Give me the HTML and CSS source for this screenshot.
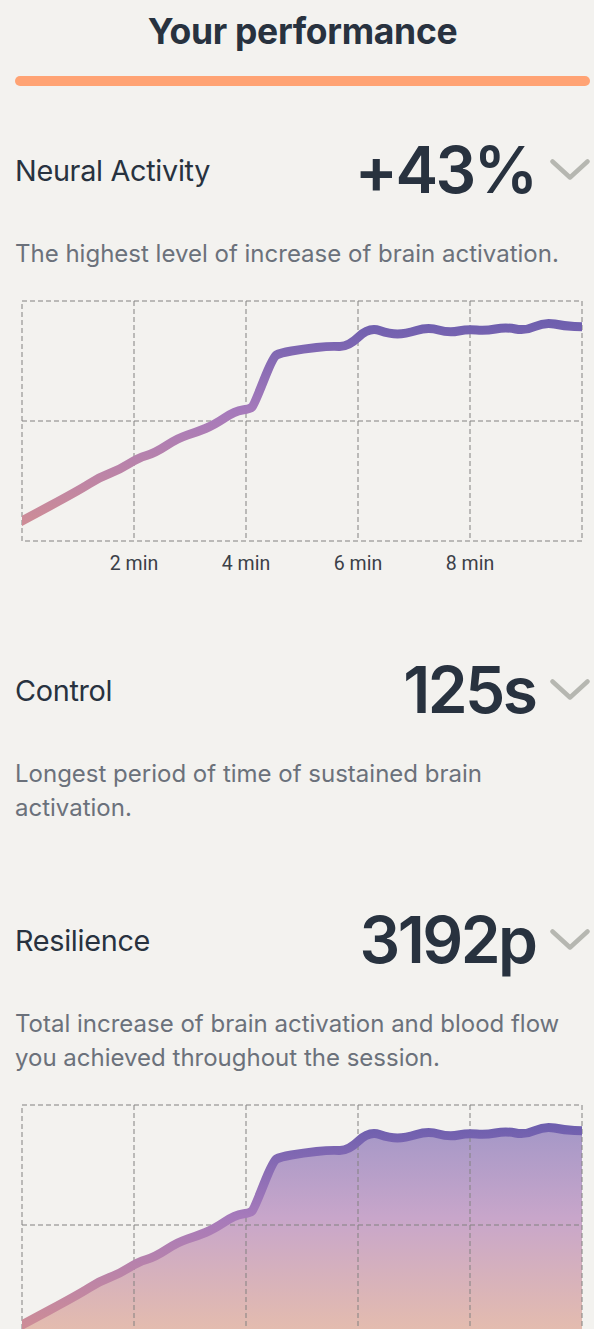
FILE: index.html
```html
<!DOCTYPE html>
<html lang="en">
<head>
  <meta charset="UTF-8" />
  <meta name="viewport" content="width=device-width, initial-scale=1.0"/>
  <title>Your performance</title>
  <link rel="stylesheet" href="styles.css">
</head>
<body>

  <div class="page">
    <h1>Your performance</h1>
    <div class="accent-bar"></div>

    <!-- Neural Activity -->
    <div class="metric metric-first">
      <span class="metric-label">Neural Activity</span>
      <div class="metric-right">
        <span class="metric-value">+43%</span>
        <svg class="chevron" width="40" height="22" viewBox="0 0 40 22">
          <path d="M2.5 2.5 L20 18.5 L37.5 2.5" />
        </svg>
      </div>
    </div>
    <p class="desc">The highest level of increase of brain activation.</p>

    <svg class="chart" width="575" height="285" viewBox="0 0 575 285">
      <defs>
        <linearGradient id="lineGrad" gradientUnits="userSpaceOnUse" x1="0" y1="25" x2="0" y2="225">
          <stop offset="0" stop-color="#6e5fae"/>
          <stop offset="0.45" stop-color="#a67abb"/>
          <stop offset="1" stop-color="#cd8c97"/>
        </linearGradient>
        <clipPath id="clip1"><rect x="7" y="0" width="560" height="285"/></clipPath>
      </defs>
      <g class="grid">
        <rect x="7" y="4" width="560" height="240"/>
        <line x1="7" y1="124" x2="567" y2="124"/>
        <line x1="119" y1="4" x2="119" y2="244"/>
        <line x1="231" y1="4" x2="231" y2="244"/>
        <line x1="343" y1="4" x2="343" y2="244"/>
        <line x1="455" y1="4" x2="455" y2="244"/>
      </g>
      <path class="curve" clip-path="url(#clip1)" stroke="url(#lineGrad)"
        d="M5 225 L34.75 209 Q64.5 193 74.75 186.5 Q85 180 94.5 176.5 Q104 173 113.5 167 Q123 161 131.5 158.5 Q140 156 151.5 148.5 Q163 141 172.5 138 Q182 135 190.5 131.5 Q199 128 209.5 121 Q220 114 227.5 113 Q235 112 237 110 Q239 108 248.5 84 Q258 60 261.5 58 Q265 56 276.5 54 Q288 52 301.5 50.5 Q315 49 324 49.5 Q333 50 343.5 40 Q354 30 364.5 33.5 Q375 37 382.5 37 Q390 37 401.5 33.5 Q413 30 423.5 33 Q434 36 443.5 34 Q453 32 461.5 33 Q470 34 480.5 32 Q491 30 500.5 32 Q510 34 520 29.5 Q530 25 539.5 27 Q549 29 559.5 29.5 L572 30"/>
      <g class="axis">
        <text x="119" y="273">2 min</text>
        <text x="231" y="273">4 min</text>
        <text x="343" y="273">6 min</text>
        <text x="455" y="273">8 min</text>
      </g>
    </svg>

    <!-- Control -->
    <div class="metric metric-after-chart">
      <span class="metric-label">Control</span>
      <div class="metric-right">
        <span class="metric-value">125s</span>
        <svg class="chevron" width="40" height="22" viewBox="0 0 40 22">
          <path d="M2.5 2.5 L20 18.5 L37.5 2.5" />
        </svg>
      </div>
    </div>
    <p class="desc">Longest period of time of sustained brain activation.</p>

    <!-- Resilience -->
    <div class="metric metric-after-text">
      <span class="metric-label">Resilience</span>
      <div class="metric-right">
        <span class="metric-value">3192p</span>
        <svg class="chevron" width="40" height="22" viewBox="0 0 40 22">
          <path d="M2.5 2.5 L20 18.5 L37.5 2.5" />
        </svg>
      </div>
    </div>
    <p class="desc">Total increase of brain activation and blood flow you achieved throughout the session.</p>

    <svg class="chart" width="575" height="285" viewBox="0 0 575 285">
      <defs>
        <linearGradient id="lineGrad2" gradientUnits="userSpaceOnUse" x1="0" y1="25" x2="0" y2="225">
          <stop offset="0" stop-color="#6e5fae"/>
          <stop offset="0.45" stop-color="#a67abb"/>
          <stop offset="1" stop-color="#cd8c97"/>
        </linearGradient>
        <linearGradient id="fillGrad" gradientUnits="userSpaceOnUse" x1="0" y1="25" x2="0" y2="230">
          <stop offset="0" stop-color="#a497c7"/>
          <stop offset="0.45" stop-color="#c8a6ca"/>
          <stop offset="1" stop-color="#e4bcae"/>
        </linearGradient>
        <clipPath id="clip2"><rect x="7" y="0" width="560" height="285"/></clipPath>
      </defs>
      <path clip-path="url(#clip2)" fill="url(#fillGrad)"
        d="M5 225 L34.75 209 Q64.5 193 74.75 186.5 Q85 180 94.5 176.5 Q104 173 113.5 167 Q123 161 131.5 158.5 Q140 156 151.5 148.5 Q163 141 172.5 138 Q182 135 190.5 131.5 Q199 128 209.5 121 Q220 114 227.5 113 Q235 112 237 110 Q239 108 248.5 84 Q258 60 261.5 58 Q265 56 276.5 54 Q288 52 301.5 50.5 Q315 49 324 49.5 Q333 50 343.5 40 Q354 30 364.5 33.5 Q375 37 382.5 37 Q390 37 401.5 33.5 Q413 30 423.5 33 Q434 36 443.5 34 Q453 32 461.5 33 Q470 34 480.5 32 Q491 30 500.5 32 Q510 34 520 29.5 Q530 25 539.5 27 Q549 29 559.5 29.5 L572 30 L572 244 L5 244 Z"/>
      <g class="grid">
        <rect x="7" y="4" width="560" height="240"/>
        <line x1="7" y1="124" x2="567" y2="124"/>
        <line x1="119" y1="4" x2="119" y2="244"/>
        <line x1="231" y1="4" x2="231" y2="244"/>
        <line x1="343" y1="4" x2="343" y2="244"/>
        <line x1="455" y1="4" x2="455" y2="244"/>
      </g>
      <path class="curve" clip-path="url(#clip2)" stroke="url(#lineGrad2)"
        d="M5 225 L34.75 209 Q64.5 193 74.75 186.5 Q85 180 94.5 176.5 Q104 173 113.5 167 Q123 161 131.5 158.5 Q140 156 151.5 148.5 Q163 141 172.5 138 Q182 135 190.5 131.5 Q199 128 209.5 121 Q220 114 227.5 113 Q235 112 237 110 Q239 108 248.5 84 Q258 60 261.5 58 Q265 56 276.5 54 Q288 52 301.5 50.5 Q315 49 324 49.5 Q333 50 343.5 40 Q354 30 364.5 33.5 Q375 37 382.5 37 Q390 37 401.5 33.5 Q413 30 423.5 33 Q434 36 443.5 34 Q453 32 461.5 33 Q470 34 480.5 32 Q491 30 500.5 32 Q510 34 520 29.5 Q530 25 539.5 27 Q549 29 559.5 29.5 L572 30"/>
    </svg>
  </div>

</body>
</html>
```

FILE: styles.css
```css
body {
  margin: 0;
  font-family: Inter, 'Noto Sans', sans-serif;
  background-color: #f3f2ef;
  color: #28323f;
}

.page {
  padding: 0 4px 0 15px;
}

h1 {
  margin: 0;
  padding-top: 12px;
  font-size: 35.5px;
  font-weight: 700;
  text-align: center;
  line-height: 40px;
  letter-spacing: -0.3px;
}

.accent-bar {
  height: 10px;
  margin-top: 24px;
  border-radius: 5px;
  background: #ffa374;
}

.metric {
  display: flex;
  justify-content: space-between;
  align-items: center;
  height: 66px;
}

.metric-first {
  margin-top: 51px;
}

.metric-after-chart {
  margin-top: 75px;
}

.metric-after-text {
  margin-top: 82px;
}

.metric-label {
  font-size: 28.8px;
  font-weight: 400;
  letter-spacing: -0.3px;
}

.metric-right {
  display: flex;
  align-items: center;
  gap: 14.5px;
}

.metric-value {
  font-size: 64px;
  font-weight: 600;
  line-height: 66px;
  letter-spacing: -2.5px;
}

.chevron path {
  fill: none;
  stroke: #b6b7b1;
  stroke-width: 4.5;
  stroke-linecap: round;
  stroke-linejoin: round;
}

.desc {
  margin: 34px 0 0;
  font-size: 24px;
  line-height: 34px;
  color: #6b717b;
}

.chart {
  display: block;
  margin-top: 26px;
  overflow: visible;
}

.grid rect,
.grid line {
  fill: none;
  stroke: #828180;
  stroke-width: 1;
  stroke-dasharray: 5 3;
}

.curve {
  fill: none;
  stroke-width: 9;
  stroke-linecap: round;
  stroke-linejoin: round;
}

.axis text {
  font-family: Roboto, sans-serif;
  font-size: 19.5px;
  fill: #3b4048;
  text-anchor: middle;
}
```
